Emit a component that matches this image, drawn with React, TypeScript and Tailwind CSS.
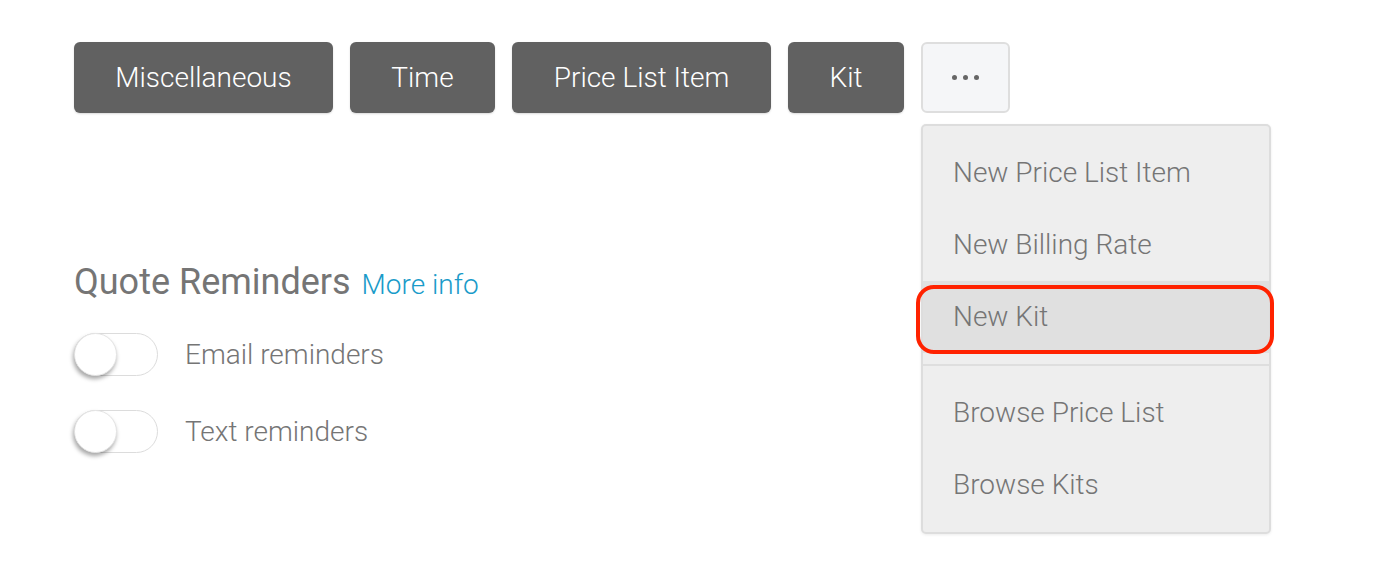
import { useState } from 'react';

const ACTIONS = [
  { label: 'Miscellaneous', w: 'w-[259px]' },
  { label: 'Time', w: 'w-[145px]' },
  { label: 'Price List Item', w: 'w-[259px]' },
  { label: 'Kit', w: 'w-[116px]' },
];

const MENU_TOP = ['New Price List Item', 'New Billing Rate', 'New Kit'];
const MENU_BOTTOM = ['Browse Price List', 'Browse Kits'];

function Toggle({ on, onChange }: { on: boolean; onChange: () => void }) {
  return (
    <button
      type="button"
      onClick={onChange}
      className="relative w-[84px] h-[43px] rounded-full border border-[#dcdcdc] bg-white flex-shrink-0"
    >
      <span
        className={`absolute top-[-1px] w-[43px] h-[43px] rounded-full bg-white shadow-[-1px_3px_4px_rgba(0,0,0,0.35)] border border-[#e4e4e4] ${
          on ? 'left-[40px]' : 'left-[-1px]'
        }`}
      />
    </button>
  );
}

function MenuItem({ label, active }: { label: string; active?: boolean }) {
  return (
    <div
      className={`relative h-[72px] flex items-center px-[30px] text-[28px] text-[#757575] ${
        active ? 'bg-[#e0e0e0]' : ''
      }`}
    >
      {label}
      {active && (
        <span className="absolute left-[-7px] right-[-5px] top-[4px] bottom-[-1px] rounded-[18px] border-[4px] border-[#ff2200]" />
      )}
    </div>
  );
}

export default function App() {
  const [email, setEmail] = useState(false);
  const [text, setText] = useState(false);

  return (
    <div
      className="w-[1374px] h-[580px] bg-white pl-[74px] pt-[42px]"
      style={{ fontFamily: 'Roboto, "Liberation Sans", sans-serif' }}
    >
      <div className="flex gap-[17px] items-start">
        {ACTIONS.map((a) => (
          <button
            key={a.label}
            type="button"
            className={`${a.w} h-[71px] rounded-[6px] bg-[#616161] text-white text-[28px] font-light shadow-[0_1px_2px_rgba(0,0,0,0.15)]`}
          >
            {a.label}
          </button>
        ))}
        <div className="relative">
          <button
            type="button"
            className="w-[89px] h-[71px] rounded-[6px] bg-[#f5f6f8] border-2 border-[#dedede] flex items-center justify-center gap-[6px]"
          >
            <span className="w-[5px] h-[5px] rounded-full bg-[#666]" />
            <span className="w-[5px] h-[5px] rounded-full bg-[#666]" />
            <span className="w-[5px] h-[5px] rounded-full bg-[#666]" />
          </button>
          <div className="absolute left-0 top-[82px] w-[350px] py-[11px] rounded-[5px] bg-[#eeeeee] border-2 border-[#dddddd] font-light shadow-[0_1px_3px_rgba(0,0,0,0.08)] z-10">
            {MENU_TOP.map((m) => (
              <MenuItem key={m} label={m} active={m === 'New Kit'} />
            ))}
            <div className="my-[11px] h-[2px] bg-[#dedede]" />
            {MENU_BOTTOM.map((m) => (
              <MenuItem key={m} label={m} />
            ))}
          </div>
        </div>
      </div>

      <div className="mt-[149px] flex items-baseline gap-[11px] leading-[40px]">
        <h2 className="text-[36px] text-[#757575] font-normal">Quote Reminders</h2>
        <a className="text-[28px] text-[#1a9bc9] font-light">More info</a>
      </div>

      <div className="mt-[28px] flex flex-col gap-[34px]">
        <div className="flex items-center gap-[27px]">
          <Toggle on={email} onChange={() => setEmail(!email)} />
          <span className="text-[28px] leading-[40px] text-[#757575] font-light">Email reminders</span>
        </div>
        <div className="flex items-center gap-[27px]">
          <Toggle on={text} onChange={() => setText(!text)} />
          <span className="text-[28px] leading-[40px] text-[#757575] font-light">Text reminders</span>
        </div>
      </div>
    </div>
  );
}
